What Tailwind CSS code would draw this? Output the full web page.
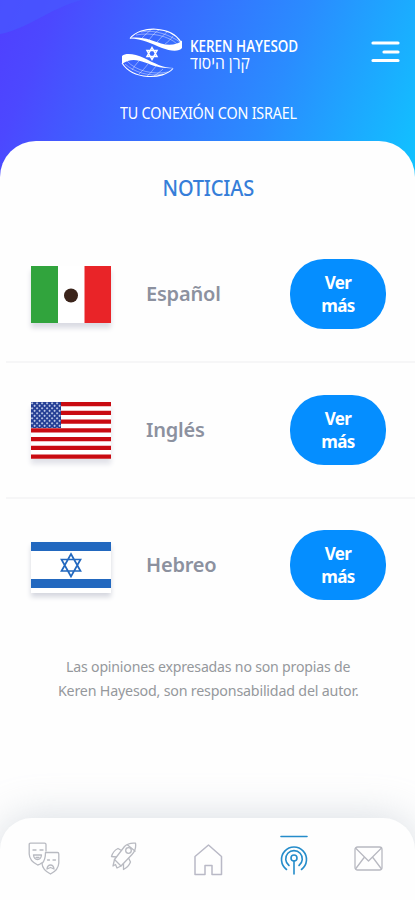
<!DOCTYPE html>
<html lang="es">
<head>
<meta charset="utf-8">
<title>Noticias</title>
<script src="https://cdn.jsdelivr.net/npm/@tailwindcss/browser@4"></script>
</head>
<body class="bg-white">
<div class="flex h-[900px] w-[415px] flex-col overflow-hidden bg-[#fefefe] font-['Noto_Sans','Open_Sans',sans-serif]">
  <header class="relative -mb-[39px] flex h-[180px] shrink-0 flex-col bg-[linear-gradient(112deg,#503fff_0%,#4c48ff_12%,#3a67ff_34%,#2a8cff_64%,#10c4ff_100%)] text-white">
    <svg class="absolute left-0 top-0" width="100" height="40" viewBox="0 0 100 40"><path d="M0 34C28 29 48 9 82 0H0Z" fill="#4757ff" opacity=".75"/></svg>
    <div class="relative flex h-[80px] items-start pl-[121px] pt-[28px]">
      <svg class="shrink-0" width="62" height="50" viewBox="0 0 62 50" fill="none" stroke="#fff">
        <path d="M9 10C22 8 32 13 40 15.500C48 18 56 17 61 12.500V20C58 24 49 23 41 20C31 16 21 10.500 9 10.500Z" fill="#fff" stroke="none"/>
        <path d="M9 10.500C20-3 50-2 60 14" stroke-width="1.1"/>
        <path d="M15 7C30 4 48 8 56 16M20 4C35 1 50 8 59 14M28 12C32 7 34 4 38 2M36 14C39 11 43 6 46 4M44 16C47 14 50 11 52 8M21 10C24 7 27 4 31 1" stroke-width=".7" opacity=".6"/>
        <path d="M53 40C42 41 33 38 24 34.500C15 31 8 31 1 36V28C5 24.500 14 26 23 30C33 35 42 40 53 40Z" fill="#fff" stroke="none"/>
        <path d="M52 40.500C42 52 12 52 1 35" stroke-width="1.1"/>
        <path d="M47 44C32 47 15 43 6 33M42 46C28 49 13 44 4 36M35 38C31 43 29 46 26 48M27 36C24 40 21 43 18 46M18 33C15 36 13 39 11 42M42 41C39 44 36 46 33 48" stroke-width=".7" opacity=".6"/>
        <path d="M31 19.500L36 28.500H26ZM31 31.500L26 22.500H36Z" stroke-width="1.500"/>
      </svg>
      <div class="ml-[7px] mt-[9px] flex w-[112px] shrink-0 flex-col">
        <div class="h-[18px] w-max origin-left scale-x-[.865] whitespace-nowrap font-['Open_Sans'] text-[15.500px] font-semibold leading-[18px]">KEREN HAYESOD</div>
        <div dir="rtl" class="h-[15px] w-max origin-left scale-x-[.92] whitespace-nowrap font-['Open_Sans','DejaVu_Sans',sans-serif] text-[17px] leading-[15px]">קרן היסוד</div>
      </div>
      <svg class="ml-[69px] mt-[13px] shrink-0" width="29" height="22" viewBox="0 0 29 22" stroke="#fff" stroke-width="3.2" stroke-linecap="round"><path d="M2 2H27M13 11H27M2 19.500H27"/></svg>
    </div>
    <div class="relative pl-[120px] pt-[21px]"><div class="w-max origin-left scale-x-[.895] whitespace-nowrap text-[16px] leading-6 tracking-[-0.2px]">TU CONEXIÓN CON ISRAEL</div></div>
  </header>

  <main class="relative flex flex-1 flex-col rounded-t-[36px] bg-[#fefefe]">
    <h1 class="flex h-[86px] items-center justify-center pl-[2px] pt-[6px] text-[22px] font-medium tracking-[-0.2px] text-[#367ed9]"><span class="scale-x-[.91]">NOTICIAS</span></h1>
    <section class="ml-[6px] flex h-[136px] items-center border-b-2 border-[#f6f6f7] pl-[25px]">
      <svg class="shadow-[0_5px_5px_#dadbe3]" width="80" height="57" viewBox="0 0 80 57"><path d="M0 0H80V57H0Z" fill="#fff"/><path d="M0 0H27V57H0Z" fill="#31a43d"/><path d="M53.500 0H80V57H53.500Z" fill="#e92428"/><circle cx="40" cy="29.500" r="7" fill="#3b241b"/></svg>
      <span class="ml-[35px] w-[144px] whitespace-nowrap text-[20px] font-semibold tracking-[-0.2px] text-[#8c919f]">Español</span>
      <button class="h-[70px] w-[96px] rounded-[34px] bg-[#058eff] text-[17px] font-bold leading-[23px] tracking-[-0.6px] text-white">Ver<br>más</button>
    </section>
    <section class="ml-[6px] flex h-[136px] items-center border-b-2 border-[#f6f6f7] pl-[25px]">
      <svg class="shadow-[0_5px_5px_#e1e2e9]" width="80" height="57" viewBox="0 0 80 57"><defs><pattern id="stars" width="5" height="5" patternUnits="userSpaceOnUse"><path d="M0 1.300h2.200M1.100 .2v2.200M2.500 3.800h2.200M3.600 2.700v2.200" stroke="#dfe6fa" stroke-width=".7"/></pattern></defs><path d="M0 0H80V57H0Z" fill="#fff"/><path d="M0 2.200H80M0 10.950H80M0 19.700H80M0 28.450H80M0 37.200H80M0 45.950H80M0 54.700H80" stroke="#c90b12" stroke-width="4.200"/><path d="M0 0H30V26H0Z" fill="#243e94"/><path d="M0 0H30V26H0Z" fill="url(#stars)"/></svg>
      <span class="ml-[35px] w-[144px] whitespace-nowrap text-[20px] font-semibold tracking-[-0.2px] text-[#8c919f]">Inglés</span>
      <button class="h-[70px] w-[96px] rounded-[34px] bg-[#058eff] text-[17px] font-bold leading-[23px] tracking-[-0.6px] text-white">Ver<br>más</button>
    </section>
    <section class="ml-[6px] flex h-[132px] items-center pl-[25px]">
      <svg class="mt-[5px] shadow-[0_4px_5px_#d5d7df]" width="80" height="51" viewBox="0 0 80 51"><path d="M0 0H80V51H0Z" fill="#fff"/><path d="M0 0H80V9H0ZM0 37H80V46H0Z" fill="#2268bf"/><path d="M40 12L49.500 29H30.500ZM40 34.500L30.500 17.500H49.500Z" fill="none" stroke="#2268bf" stroke-width="1.700"/></svg>
      <span class="ml-[35px] w-[144px] whitespace-nowrap text-[20px] font-semibold tracking-[-0.2px] text-[#8c919f]">Hebreo</span>
      <button class="h-[70px] w-[96px] rounded-[34px] bg-[#058eff] text-[17px] font-bold leading-[23px] tracking-[-0.6px] text-white">Ver<br>más</button>
    </section>
    <p class="flex flex-col items-center pl-[1px] pt-[23px] text-[15px] leading-[24px] text-[#95989c]">
      <span class="scale-x-[.94] whitespace-nowrap tracking-[-0.2px]">Las opiniones expresadas no son propias de</span>
      <span class="scale-x-[.95] whitespace-nowrap tracking-[-0.2px]">Keren Hayesod, son responsabilidad del autor.</span>
    </p>
  </main>

  <nav class="relative flex h-[82px] shrink-0 rounded-t-[32px] bg-[#fefefe] pt-[17px] shadow-[0_0_40px_#aab4c077]">
    <svg class="ml-[28px] mt-[7px]" width="32" height="33" viewBox="0 0 32 33" fill="none" stroke="#b8bac1" stroke-width="1.300" stroke-linecap="round" stroke-linejoin="round"><path d="M13.500 21Q12 22.500 9.700 23Q1.500 19 1.200 12V2.500Q1.200 1.200 2.500 1.200H16.500Q18 1.200 18 2.500V9M5 8H8M12 8H15M5.500 13H13.500Q13 17.500 9.500 17.500T5.500 13ZM8 15.500H11"/><path d="M17.500 10.500H29.500Q30.800 10.500 30.800 12V21Q30.500 28 22.500 32Q14.500 28 14 21.500Q17.500 18 17.500 10.500ZM19.500 18H21.500M25 18H27.500M19 27Q19.500 23 22.500 23T26 27L22.500 25.500Z"/></svg>
    <svg class="ml-[50px] mt-[7px]" width="28" height="30" viewBox="0 0 28 30" fill="none" stroke="#b8bac1" stroke-width="1.300" stroke-linejoin="round"><path d="M4.500 17.500L14.500 4.500Q18.500 .5 25.500 1.200Q26.500 8 22 12.500L11 24ZM17 2.500L25.500 9.500"/><circle cx="18.500" cy="8.500" r="2.800"/><path d="M11.500 8.500L8 6.500Q3 9 1.500 14.500L6.500 15M18.500 16L20.500 20Q18.500 25 13.500 27.500L13.500 21.500M4.500 17.500L3 24L5.500 22.500L7 26L11 24"/></svg>
    <svg class="ml-[56px] mt-[9px]" width="29" height="32" viewBox="0 0 29 32" fill="none" stroke="#b9b9c6" stroke-width="1.500" stroke-linejoin="round"><path d="M1 12.500L14.500 1L27.500 12.500V30.500H18V21.500H11V30.500H1Z"/></svg>
    <svg class="ml-[57px]" width="28" height="41" viewBox="0 0 28 41" fill="none" stroke="#258cca" stroke-width="1.600" stroke-linecap="round"><path d="M1 1.500H27M14 26V39"/><path d="M6.500 34.500A12.500 12.500 0 1 1 21.500 34.500M9 30.500A8.300 8.300 0 1 1 19 30.500"/><circle cx="14" cy="23" r="3"/></svg>
    <svg class="ml-[46px] mt-[11px]" width="29" height="25" viewBox="0 0 29 25" fill="none" stroke="#b8b9c1" stroke-width="1.300" stroke-linejoin="round"><rect x="1" y="1" width="27" height="23" rx="2.500"/><path d="M1.500 2L14.500 15L27.500 2M1.500 23L10.500 11M27.500 23L18.500 11"/></svg>
  </nav>
</div>
</body>
</html>
